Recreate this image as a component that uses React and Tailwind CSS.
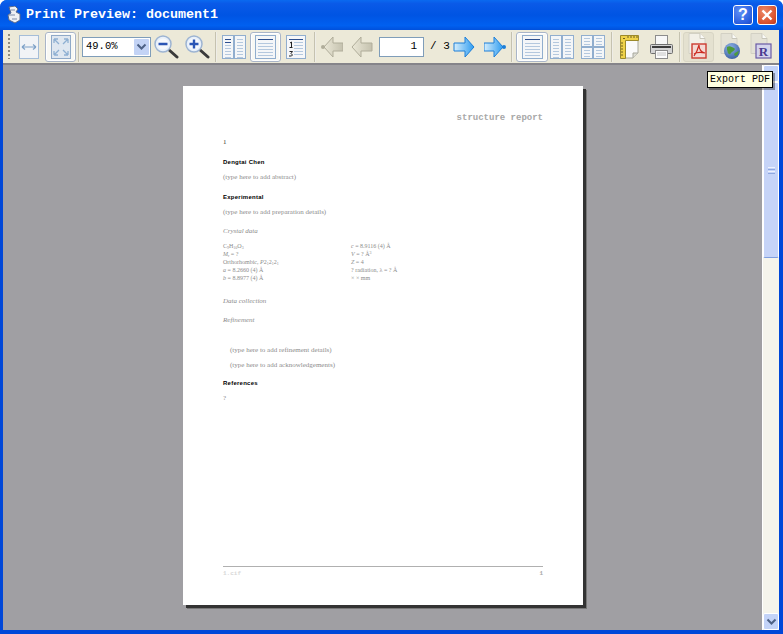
import React from "react";

const mono = "font-['Liberation_Mono',monospace]";
const serif = "font-['Liberation_Serif',serif]";
const sans = "font-['Liberation_Sans',sans-serif]";

const Sep = ({ ml }) => <div className={`w-px h-[30px] bg-[#c5c2b0] border-r border-white/70 box-content shrink-0 ${ml}`} />;

const FitWidth = () => (
  <svg width="20" height="24" viewBox="0 0 20 24">
    <rect x="0.5" y="0.5" width="19" height="23" fill="#f1f3f6" stroke="#a5bdd8" />
    <path d="M3 12h14M3 12l3-2.5M3 12l3 2.5M17 12l-3-2.5M17 12l-3 2.5" stroke="#7fa2c8" strokeWidth="1.2" fill="none" />
  </svg>
);

const FitPage = () => (
  <svg width="20" height="24" viewBox="0 0 20 24">
    <rect x="0.5" y="0.5" width="19" height="23" fill="#dfe7f0" stroke="#8fa9c8" />
    <path d="M3 4l5 5M3 4v4M3 4h4M17 4l-5 5M17 4v4M17 4h-4M3 20l5-5M3 20v-4M3 20h4M17 20l-5-5M17 20v-4M17 20h-4" stroke="#8fb0d2" strokeWidth="1.3" fill="none" />
  </svg>
);

const Magnifier = ({ plus }) => (
  <svg width="25" height="24" viewBox="0 0 25 24">
    <path d="M14 14l9 8" stroke="#3a3a3a" strokeWidth="3" strokeLinecap="round" />
    <circle cx="9" cy="9" r="8" fill="#e8f0fa" stroke="#9db4d2" strokeWidth="1.5" />
    <circle cx="9" cy="9" r="5.5" fill="#f6f9fd" />
    <path d={plus ? "M4.5 9h9M9 4.5v9" : "M4.5 9h9"} stroke="#2a55b5" strokeWidth="2.4" />
  </svg>
);

const Lines = ({ x, y, w, n, gap = 3, color = "#b4c8de" }) => (
  <path d={Array.from({ length: n }, (_, i) => `M${x} ${y + i * gap + 0.5}h${w}`).join("")} stroke={color} fill="none" />
);

const FacingPages = ({ heads }) => (
  <svg width="24" height="24" viewBox="0 0 24 24">
    <rect x="0.5" y="0.5" width="11" height="23" fill="#f4f6f8" stroke="#91aece" />
    <rect x="12.5" y="0.5" width="11" height="23" fill="#f4f6f8" stroke="#91aece" />
    {heads && <path d="M3 4.5h6M3 7.5h6" stroke="#2d4f8f" />}
    <Lines x={3} y={heads ? 10 : 4} w={6} n={heads ? 5 : 7} />
    <Lines x={15} y={4} w={6} n={7} />
  </svg>
);

const SinglePage = () => (
  <svg width="21" height="24" viewBox="0 0 21 24">
    <rect x="0.5" y="0.5" width="20" height="23" fill="#f4f6f8" stroke="#91aece" />
    <path d="M3 4.5h15" stroke="#2d4f8f" />
    <Lines x={3} y={8} w={15} n={5} />
  </svg>
);

const Numbered = () => (
  <svg width="20" height="24" viewBox="0 0 20 24">
    <rect x="0.5" y="0.5" width="19" height="23" fill="#f6f7f9" stroke="#91aece" />
    <path d="M3 4.5h14" stroke="#2d4f8f" />
    <path d="M4 8l1.5-1v5M3.5 12.5h3M3.5 16.5h3l-1.5 2 1.5 1.5-1 1h-2.5" stroke="#222" fill="none" />
    <Lines x={8} y={7} w={9} n={5} />
  </svg>
);

const Arrow = ({ id, from, mid, edge, flip, dot, w = 22 }) => (
  <svg width={w} height="24" viewBox="0 0 22 24" className={flip ? "-scale-x-100" : ""}>
    <defs>
      <linearGradient id={id} x1="0" x2="1" y1="0" y2="0">
        <stop offset="0" stopColor={from} />
        <stop offset="1" stopColor={mid} />
      </linearGradient>
    </defs>
    <path d={dot ? "M0 8h10V2l9 10-9 10v-6H0z" : "M1 8h11V2l9 10-9 10v-6H1z"} fill={`url(#${id})`} stroke={edge} strokeWidth="1" strokeLinejoin="round" />
    {dot && <circle cx="20" cy="12" r="2" fill={edge} />}
  </svg>
);

const Ruler = () => (
  <svg width="19" height="24" viewBox="0 0 19 24">
    <path d="M4 5h14v13l-5 5H4z" fill="#fafafa" stroke="#a8a89c" />
    <path d="M13 23v-5h5" fill="#dcdcd4" stroke="#a8a89c" />
    <path d="M0.5 0.5h18v5h-13v18h-5z" fill="#efd24a" stroke="#9c8a2c" />
    <path d="M3 3.5h2M8 1v2M11 1v2M14 1v2M17 1v2M1 8h2M1 11h2M1 14h2M1 17h2M1 20h2" stroke="#6e6020" />
  </svg>
);

const Printer = () => (
  <svg width="23" height="24" viewBox="0 0 23 24">
    <rect x="5.5" y="0.5" width="12" height="10" fill="#f7f7f7" stroke="#8c8c8c" />
    <rect x="0.5" y="9.5" width="22" height="9" rx="1" fill="#d4d4d4" stroke="#6f6f6f" />
    <rect x="2" y="11" width="19" height="2" fill="#3c3c3c" />
    <rect x="5.5" y="15.5" width="12" height="8" fill="#fbfbfb" stroke="#8c8c8c" />
    <path d="M7 18h9M7 20h9" stroke="#c4c4c4" />
  </svg>
);

const DocBase = ({ children, fill = "#e4e2d6" }) => (
  <svg width="24" height="27" viewBox="0 0 24 27">
    <path d="M2 0.5h11l5 5v15H2z" fill={fill} stroke="#d2d0c4" />
    <path d="M13 0.5v5h5" fill="#fbfbf8" stroke="#c8c6ba" />
    {children}
  </svg>
);

const PdfIcon = () => (
  <DocBase fill="#f2f0e8">
    <rect x="5" y="11" width="14" height="14" fill="#f4d9d4" stroke="#cc3a30" strokeWidth="1.4" />
    <path d="M12 12c-1 4-2 7-5 11M12 12c0 4 2 7 6 8M7 21c3-2 6-2 11-1" stroke="#cc2a20" strokeWidth="1.2" fill="none" />
  </DocBase>
);

const GlobeIcon = () => (
  <DocBase>
    <defs>
      <radialGradient id="globe" cx="0.4" cy="0.3" r="0.8">
        <stop offset="0" stopColor="#8fb4ea" />
        <stop offset="1" stopColor="#34589c" />
      </radialGradient>
    </defs>
    <circle cx="13" cy="18" r="8" fill="url(#globe)" />
    <path d="M8 14c3-2 5 0 7 1s0 3-2 4-1 3-3 2-1-3-2-4zM15 21c2-2 3-2 5-3-1 3-2 5-4 5z" fill="#4e9a3c" />
  </DocBase>
);

const RIcon = () => (
  <DocBase>
    <rect x="7" y="11" width="15" height="14" fill="#d4d4ec" stroke="#6a5aa6" strokeWidth="1.2" />
    <text x="14.5" y="23" textAnchor="middle" fontSize="13" fontWeight="700" fontFamily="Liberation Serif, serif" fill="#4a3a90">R</text>
  </DocBase>
);

const ChevronDown = ({ className }) => (
  <svg width="11" height="8" viewBox="0 0 11 8" className={className}>
    <path d="M1.5 1.5l4 4 4-4" stroke="#4d6185" strokeWidth="2" fill="none" />
  </svg>
);

const Frame = ({ w, ml, children }) => (
  <div className={`h-[30px] ${w} ${ml} shrink-0 flex items-center justify-center rounded-[3px] border border-[#a9b5c8] bg-[#f8f8f4] shadow-[inset_0_0_0_1px_#fff]`}>
    {children}
  </div>
);

const Slot = ({ ml, children }) => <div className={`shrink-0 flex items-center ${ml}`}>{children}</div>;

const Toolbar = () => (
  <div className="h-[33px] bg-[#ece9d8] flex items-center pl-[5px] shrink-0">
    <div className="w-[2px] h-[25px] shrink-0 bg-[repeating-linear-gradient(180deg,#8e8c80_0,#8e8c80_2px,transparent_2px,transparent_4px)]" />
    <Slot ml="ml-[9px]"><FitWidth /></Slot>
    <Frame w="w-[31px]" ml="ml-[6px]"><FitPage /></Frame>
    <Sep ml="ml-[2px]" />
    <div className="ml-[2px] w-[69px] h-[20px] shrink-0 border border-[#7f9db9] bg-white flex items-center justify-between pl-[3px] pr-[1px]">
      <span className={`${mono} text-[10.5px] text-black`}>49.0%</span>
      <div className="w-[15px] h-[16px] bg-[#c3d3f5] rounded-[1px] flex items-center justify-center"><ChevronDown /></div>
    </div>
    <Slot ml="ml-[3px]"><Magnifier /></Slot>
    <Slot ml="ml-[6px]"><Magnifier plus /></Slot>
    <Sep ml="ml-[5px]" />
    <Slot ml="ml-[5px]"><FacingPages heads /></Slot>
    <Frame w="w-[31px]" ml="ml-[4px]"><SinglePage /></Frame>
    <Slot ml="ml-[5px]"><Numbered /></Slot>
    <Sep ml="ml-[8px]" />
    <Slot ml="ml-[5px]"><Arrow id="n1" from="#c4c1ae" mid="#ebe8d7" edge="#b0ad9a" flip dot /></Slot>
    <Slot ml="ml-[8px]"><Arrow id="n2" from="#c4c1ae" mid="#ebe8d7" edge="#b0ad9a" flip /></Slot>
    <div className={`ml-[6px] w-[45px] h-[20px] shrink-0 border border-[#7f9db9] bg-white flex items-center justify-end pr-[6px] ${mono} text-[11px] text-black`}>1</div>
    <span className={`ml-[6px] w-[20px] shrink-0 ${mono} text-[11px] text-black whitespace-pre`}>/ 3</span>
    <Slot ml="ml-[3px]"><Arrow id="n3" from="#d6eefc" mid="#2e9cf0" edge="#1c7ed8" /></Slot>
    <Slot ml="ml-[9px]"><Arrow id="n4" from="#d6eefc" mid="#2e9cf0" edge="#1c7ed8" dot /></Slot>
    <Sep ml="ml-[5px]" />
    <Frame w="w-[32px]" ml="ml-[3px]"><SinglePage /></Frame>
    <Slot ml="ml-[2px]"><FacingPages /></Slot>
    <Slot ml="ml-[7px]">
      <svg width="24" height="24" viewBox="0 0 24 24">
        <rect x="0.5" y="0.5" width="11" height="11" fill="#f4f6f8" stroke="#91aece" />
        <rect x="12.5" y="0.5" width="11" height="11" fill="#f4f6f8" stroke="#91aece" />
        <rect x="0.5" y="12.5" width="11" height="11" fill="#f4f6f8" stroke="#91aece" />
        <rect x="12.5" y="12.5" width="11" height="11" fill="#f4f6f8" stroke="#91aece" />
        <Lines x={3} y={3} w={6} n={3} />
        <Lines x={15} y={3} w={6} n={3} />
        <Lines x={3} y={15} w={6} n={3} />
        <Lines x={15} y={15} w={6} n={3} />
      </svg>
    </Slot>
    <Sep ml="ml-[6px]" />
    <Slot ml="ml-[7px]"><Ruler /></Slot>
    <Slot ml="ml-[11px]"><Printer /></Slot>
    <Sep ml="ml-[6px]" />
    <div className="ml-[2px] w-[31px] h-[30px] shrink-0 rounded-[3px] bg-[#e4e1d0] border border-[#d8d5c4] flex items-center justify-center"><PdfIcon /></div>
    <Slot ml="ml-[5px]"><GlobeIcon /></Slot>
    <Slot ml="ml-[6px]"><RIcon /></Slot>
  </div>
);

const Line = ({ className = "", children }) => (
  <div className={`h-[8px] leading-[8px] whitespace-pre ${className}`}>{children}</div>
);

const Heading = ({ className, children }) => (
  <Line className={`${sans} font-bold text-[6px] text-black tracking-[0.25px] ${className}`}>{children}</Line>
);

const Body = ({ className, children }) => (
  <Line className={`${serif} text-[7px] text-[#8c8c8c] ${className}`}>{children}</Line>
);

const Italic = ({ className, children }) => (
  <Line className={`${serif} italic text-[7px] text-[#8c8c8c] ${className}`}>{children}</Line>
);

const Cell = ({ children }) => (
  <Line className={`${serif} text-[6px] text-[#8c8c8c]`}>{children}</Line>
);

const Page = () => (
  <div className="w-[400px] h-[519px] bg-white shadow-[3px_3px_0_#333,4px_4px_0_#777] flex flex-col pt-[28px] px-[40px] pb-[27px]">
    <Line className={`${mono} font-bold text-[9px] text-[#a8a8a8] text-right`}>structure report</Line>
    <Line className={`${serif} text-[7px] text-[#333] mt-[16px]`}>1</Line>
    <Heading className="mt-[12px]">Dengtai Chen</Heading>
    <Body className="mt-[7px]">(type here to add abstract)</Body>
    <Heading className="mt-[12px]">Experimental</Heading>
    <Body className="mt-[7px]">(type here to add preparation details)</Body>
    <Italic className="mt-[11px]">Crystal data</Italic>
    <div className="mt-[7px] grid grid-cols-[128px_1fr]">
      <Cell>C<sub className="text-[4px]">9</sub>H<sub className="text-[4px]">10</sub>O<sub className="text-[4px]">3</sub></Cell>
      <Cell><i>c</i> = 8.9116 (4) Å</Cell>
      <Cell><i>M</i><sub className="text-[4px]">r</sub> = ?</Cell>
      <Cell><i>V</i> = ? Å<sup className="text-[4px]">3</sup></Cell>
      <Cell>Orthorhombic, <i>P</i>2<sub className="text-[4px]">1</sub>2<sub className="text-[4px]">1</sub>2<sub className="text-[4px]">1</sub></Cell>
      <Cell><i>Z</i> = 4</Cell>
      <Cell><i>a</i> = 8.2660 (4) Å</Cell>
      <Cell>? radiation, λ = ? Å</Cell>
      <Cell><i>b</i> = 8.8977 (4) Å</Cell>
      <Cell>× × mm</Cell>
    </div>
    <Italic className="mt-[15px]">Data collection</Italic>
    <Italic className="mt-[11px]">Refinement</Italic>
    <Body className="mt-[22px] pl-[7px]">(type here to add refinement details)</Body>
    <Body className="mt-[7px] pl-[7px]">(type here to add acknowledgements)</Body>
    <Heading className="mt-[10px]">References</Heading>
    <Body className="mt-[7px]">?</Body>
    <div className="mt-auto border-t border-[#b0b0b0] pt-[3px] flex justify-between">
      <Line className={`${mono} font-bold text-[6px] text-[#d8d8d8]`}>1.cif</Line>
      <Line className={`${mono} font-bold text-[6px] text-[#a8a8a8]`}>1</Line>
    </div>
  </div>
);

const Scrollbar = () => (
  <div className="w-[17px] shrink-0 bg-[#f5f4ec] border-l border-white flex flex-col">
    <div className="h-[17px] shrink-0 bg-[#c3d3f8] border border-white rounded-[2px]" />
    <div className="h-[176px] shrink-0 bg-[#c6d4f8] border border-white border-b-[#7f9fe0] rounded-[2px] flex flex-col items-center justify-center gap-[1px]">
      <div className="w-[7px] h-px bg-[#eef2fd]" />
      <div className="w-[7px] h-px bg-[#8fa8e0]" />
      <div className="w-[7px] h-px bg-[#eef2fd]" />
      <div className="w-[7px] h-px bg-[#8fa8e0]" />
    </div>
    <div className="flex-1" />
    <div className="h-[17px] shrink-0 bg-[#c3d3f8] border border-white rounded-[2px] flex items-center justify-center"><ChevronDown /></div>
  </div>
);

const App = () => (
  <div className="w-[783px] h-[634px] bg-white overflow-hidden">
    <div className="relative w-full h-full flex flex-col rounded-t-[7px] bg-[#0047d8] overflow-hidden">
      <div className="h-[30px] shrink-0 flex items-center pl-[6px] pr-[6px] bg-[linear-gradient(180deg,#0a6af0_0%,#0a5ae8_12%,#0054e3_50%,#0060f0_85%,#0050dc_100%)]">
        <svg width="16" height="18" viewBox="0 0 16 18" className="shrink-0">
          <path d="M3 1l6-1 3 3-2 3 4 2v6l-5 3-6-3-1-5 3-2z" fill="#eef0f4" stroke="#5a6a8c" />
          <path d="M5 4h4M3 9h6M6 13h5" stroke="#7c8aa6" />
        </svg>
        <span className={`ml-[4px] ${mono} font-bold text-[13.33px] text-white`}>Print Preview: document1</span>
        <div className="ml-auto w-[20px] h-[20px] rounded-[3px] border border-white bg-[radial-gradient(circle_at_35%_30%,#5f8ff5,#2a5fe0_70%,#1f48c0)] flex items-center justify-center text-white font-bold text-[16px] leading-none font-['Liberation_Sans',sans-serif]">?</div>
        <div className="ml-[4px] w-[20px] h-[20px] rounded-[3px] border border-white bg-[radial-gradient(circle_at_35%_30%,#ec8a68,#d9502c_70%,#b83a1c)] flex items-center justify-center">
          <svg width="12" height="12" viewBox="0 0 12 12"><path d="M1.5 1.5l9 9M10.5 1.5l-9 9" stroke="#fff" strokeWidth="2.4" /></svg>
        </div>
      </div>
      <div className="flex-1 min-h-0 flex flex-col ml-[3px] mr-[4px] mb-[4px]">
        <Toolbar />
        <div className="flex-1 min-h-0 flex border-t-2 border-[#85848a] bg-[#a09fa3]">
          <div className="flex-1 flex justify-center pt-[21px] pl-[1px]">
            <Page />
          </div>
          <Scrollbar />
        </div>
      </div>
      <div className={`absolute left-[707px] top-[71px] w-[66px] h-[17px] border border-black bg-[#ffffe1] shadow-[2px_2px_0_rgba(0,0,0,0.35)] flex items-center justify-center ${mono} text-[10px] text-black`}>Export PDF</div>
    </div>
  </div>
);

export default App;
